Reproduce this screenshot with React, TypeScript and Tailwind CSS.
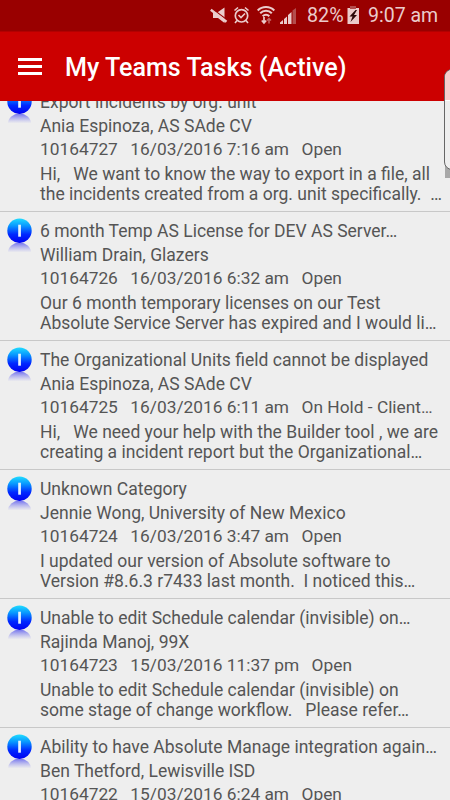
import React from "react";

interface Task {
  title: string;
  customer: string;
  id: string;
  date: string;
  status: string;
  details: string[];
}

const tasks: Task[] = [
  {
    title: "Export incidents by org. unit",
    customer: "Ania Espinoza, AS SAde CV",
    id: "10164727",
    date: "16/03/2016 7:16 am",
    status: "Open",
    details: [
      "Hi,   We want to know the way to export in a file, all",
      "the incidents created from a org. unit specifically.  …",
    ],
  },
  {
    title: "6 month Temp AS License for DEV AS Server…",
    customer: "William Drain, Glazers",
    id: "10164726",
    date: "16/03/2016 6:32 am",
    status: "Open",
    details: [
      "Our 6 month temporary licenses on our Test",
      "Absolute Service Server has expired and I would li…",
    ],
  },
  {
    title: "The Organizational Units field cannot be displayed",
    customer: "Ania Espinoza, AS SAde CV",
    id: "10164725",
    date: "16/03/2016 6:11 am",
    status: "On Hold - Client…",
    details: [
      "Hi,   We need your help with the Builder tool , we are",
      "creating a incident report but the Organizational…",
    ],
  },
  {
    title: "Unknown Category",
    customer: "Jennie Wong, University of New Mexico",
    id: "10164724",
    date: "16/03/2016 3:47 am",
    status: "Open",
    details: [
      "I updated our version of Absolute software to",
      "Version #8.6.3 r7433 last month.  I noticed this…",
    ],
  },
  {
    title: "Unable to edit Schedule calendar (invisible) on…",
    customer: "Rajinda Manoj, 99X",
    id: "10164723",
    date: "15/03/2016 11:37 pm",
    status: "Open",
    details: [
      "Unable to edit Schedule calendar (invisible) on",
      "some stage of change workflow.   Please refer…",
    ],
  },
  {
    title: "Ability to have Absolute Manage integration again…",
    customer: "Ben Thetford, Lewisville ISD",
    id: "10164722",
    date: "15/03/2016 6:24 am",
    status: "Open",
    details: [],
  },
];

const StatusBar = () => (
  <div className="flex h-[31px] shrink-0 items-center bg-[#990000] text-[#ebcccc]">
    <svg className="ml-[210px] h-[31px] w-[88px] shrink-0" viewBox="210 0 88 31" fill="none">
      {/* Muted speaker */}
      <path d="M213 12h5l6.500-4.500v15.500l-6.500-5h-5z" fill="#ebcccc" />
      <path d="M211.500 8.200l16 12" stroke="#990000" strokeWidth="1.200" />
      <path d="M210.800 9.800l15.700 12" stroke="#ebcccc" strokeWidth="2.400" />
      {/* Alarm */}
      <circle cx="241.500" cy="15.800" r="6.200" stroke="#ebcccc" strokeWidth="1.700" />
      <path d="M238.500 15l2.500 2.500 4-4M234.500 10.500l3.500-3M248.500 10.500l-3.500-3M237 20.500l-2 2.500M246 20.500l2 2.500" stroke="#ebcccc" strokeWidth="1.600" />
      {/* Wifi */}
      <path d="M257.700 10.500c4.600-4.600 12-4.600 16.600 0M260.200 13.300c3.200-3.400 8.400-3.400 11.600 0M262.700 16.200c1.900-2 4.700-2 6.600 0" stroke="#ebcccc" strokeWidth="2" />
      <path d="M264 17v6M261.800 20.500l2.200 2.500 2.200-2.500" stroke="#ebcccc" strokeWidth="1.700" />
      <path d="M269 23.500v-5M267 20.500l2-2 2 2" stroke="#c26666" strokeWidth="1.500" />
      {/* Signal */}
      <path d="M280 24v-1.500l3-2.500v4zM284 24v-5l3-2.500V24zM288 24v-9l3.500-3v12z" fill="#ebcccc" />
      <path d="M292.500 24V10.500L296 8v16z" fill="#b34d4d" />
    </svg>
    <span className="ml-[9px] w-[36px] font-[Roboto] text-[19.700px] leading-[31px] whitespace-nowrap">82%</span>
    <svg className="ml-[4px] h-[31px] w-[13px] shrink-0" viewBox="347 0 13 31">
      <path d="M347.500 8H359v16h-11.500z" fill="#ebcccc" />
      <path d="M350 6h6v3h-6z" fill="#b34d4d" />
      <path d="M355.500 10l-6 6.500h3l-2 5.500 6.500-7h-3l3-5z" fill="#2b0909" />
    </svg>
    <span className="ml-[8px] font-[Roboto] text-[19.500px] leading-[31px] whitespace-nowrap">9:07 am</span>
  </div>
);

const Header = () => (
  <header className="flex h-[70px] shrink-0 items-center border-t border-[#b30000] bg-[#cc0000] text-white">
    <div className="ml-[18px] flex w-6 flex-col gap-[4px]">
      <div className="h-[3px] bg-white" />
      <div className="h-[3px] bg-white" />
      <div className="h-[3px] bg-white" />
    </div>
    <h1 className="mt-[2px] ml-[23px] font-[Roboto] text-[25.100px] font-medium whitespace-nowrap">
      My Teams Tasks (Active)
    </h1>
  </header>
);

const InfoIcon = () => (
  <svg className="h-9 w-[26px]" viewBox="0 0 26 36">
    <defs>
      <linearGradient id="ball" x1="0" y1="0" x2="0" y2="1">
        <stop offset="0" stopColor="#20dcff" />
        <stop offset="0.3" stopColor="#0898ff" />
        <stop offset="0.65" stopColor="#0028ff" />
        <stop offset="1" stopColor="#0000f0" />
      </linearGradient>
      <linearGradient id="mirror" x1="0" y1="0" x2="0" y2="1">
        <stop offset="0" stopColor="#4545ee" stopOpacity="0.75" />
        <stop offset="1" stopColor="#8080ee" stopOpacity="0" />
      </linearGradient>
    </defs>
    <path d="M2 34.500a11.500 10 0 0 1 23 0z" fill="url(#mirror)" />
    <circle cx="13.500" cy="12.700" r="12.200" fill="url(#ball)" />
    <path d="M12.200 6.700h2.700v12h-2.700z" fill="#e8f4ff" />
  </svg>
);

const TaskRow = ({ task }: { task: Task }) => (
  <li className="flex h-[129px] border-b border-[#c8c8c8] pt-[6px]">
    <div className="w-10 shrink-0 pl-[6px]">
      <InfoIcon />
    </div>
    <div className="pt-px font-[Roboto] text-[17.530px] leading-6 whitespace-pre text-[#555555]">
      <p>{task.title}</p>
      <p>{task.customer}</p>
      <p className="-mt-px flex gap-[12.500px] text-[17.320px]">
        <span>{task.id}</span>
        <span>{task.date}</span>
        <span>{task.status}</span>
      </p>
      <div className="mt-[3px] leading-5">
        {task.details.map((line) => (
          <p key={line}>{line}</p>
        ))}
      </div>
    </div>
  </li>
);

const App = () => {
  return (
    <div className="relative flex h-[800px] w-[450px] flex-col overflow-hidden bg-[#eeeeee]">
      <StatusBar />
      <Header />
      <main className="min-h-0 flex-1 overflow-hidden">
        <ul className="-mt-[18px]">
          {tasks.map((task) => (
            <TaskRow key={task.id} task={task} />
          ))}
        </ul>
      </main>

      {/* Edge panel handle over the right side of the screen */}
      <div className="absolute top-[101px] right-0 h-[77px] w-[5px] bg-[#a8a8a8]" />
      <div className="absolute top-[69px] -right-[8px] h-[101px] w-[14px] overflow-hidden rounded-l-[8px] border border-[#666666] bg-[#eeeeee]">
        <div className="h-[31px] border-b border-white bg-[#f8cccc]" />
      </div>
    </div>
  );
};

export default App;
